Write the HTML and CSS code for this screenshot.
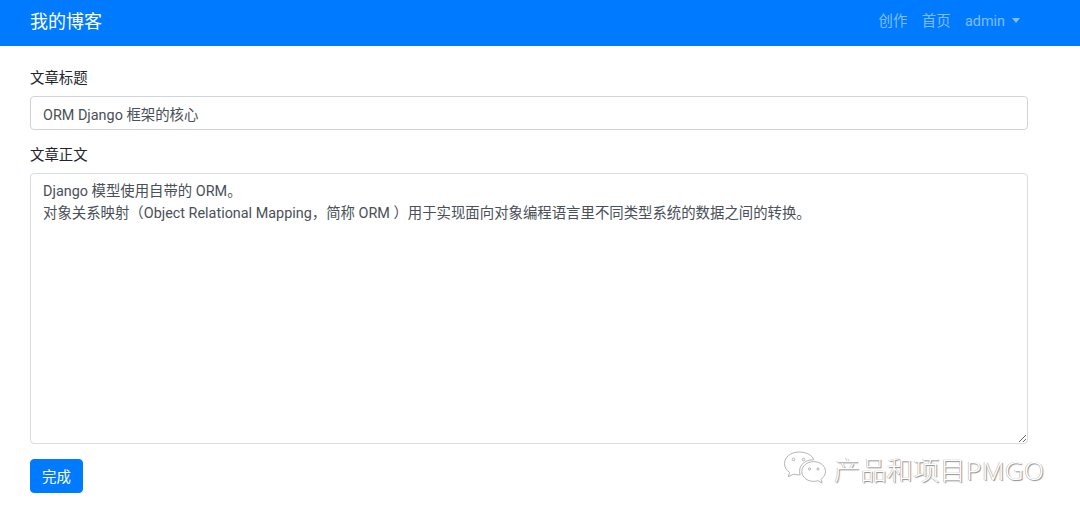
FILE: index.html
```html
<!DOCTYPE html>
<html lang="zh-CN">
<head>
<meta charset="utf-8">
<title>我的博客</title>
<link rel="stylesheet" href="styles.css">
</head>
<body>
<nav class="navbar">
  <a class="brand" href="#">我的博客</a>
  <div class="nav-links">
    <a class="nav-link" href="#">创作</a>
    <a class="nav-link" href="#">首页</a>
    <a class="nav-link" href="#">admin<span class="caret"></span></a>
  </div>
</nav>
<main class="content">
  <form class="post-form">
    <div class="form-group">
      <label class="form-label" for="title">文章标题</label>
      <input class="form-control" id="title" type="text" value="ORM Django 框架的核心">
    </div>
    <div class="form-group">
      <label class="form-label" for="body">文章正文</label>
      <textarea class="form-control form-area" id="body">Django 模型使用自带的 ORM。
对象关系映射（Object Relational Mapping，简称 ORM ）用于实现面向对象编程语言里不同类型系统的数据之间的转换。</textarea>
    </div>
    <button class="btn" type="button">完成</button>
  </form>
</main>
<div class="watermark">
  <svg class="wm-icon" width="46" height="38" viewBox="0 0 46 38" fill="#fff" stroke="#b4b4b4" stroke-width="1">
    <path d="M17 2C8.7 2 2.5 7.2 2.5 13.6c0 3.700 2 6.600 5.200 8.800l-1.400 4.300 5.200-2.600c1.900.5 3.500.8 5.500.8h1.200c-.4-1.200-.6-2.400-.6-3.700 0-6.500 5.800-11.400 13-11.400h1.100C30.500 5.300 24.300 2 17 2z"/>
    <path d="M43.500 21.500c0-5.500-5.400-9.900-11.700-9.900-6.700 0-12 4.400-12 9.900s5.300 9.900 12 9.900c1.400 0 2.800-.3 4.100-.7l4.200 2.400-1.100-3.800c2.700-2 4.500-4.700 4.500-7.800z"/>
    <circle cx="11.500" cy="9.500" r="1.300"/>
    <circle cx="21.500" cy="9.500" r="1.300"/>
    <circle cx="27.500" cy="19" r="1.100"/>
    <circle cx="36" cy="19" r="1.100"/>
  </svg>
  <span class="wm-text">产品和项目PMGO</span>
</div>
</body>
</html>
```
FILE: styles.css
```css
* { box-sizing: border-box; }
html, body { margin: 0; padding: 0; }
body {
  height: 519px;
  overflow: hidden;
  position: relative;
  background: #fff;
  color: #212529;
  font-family: Roboto, "Noto Sans CJK SC", sans-serif;
  font-size: 14.4px;
  line-height: 1.5;
}
.navbar {
  height: 46px;
  background: #007bff;
  padding: 0 30px 3px;
  display: flex;
  align-items: center;
  justify-content: space-between;
}
.brand { color: #fff; font-size: 18px; text-decoration: none; line-height: 1.5; }
.nav-links { display: flex; gap: 14.4px; padding-right: 30px; }
.nav-link { color: rgba(255,255,255,.5); text-decoration: none; }
.caret {
  display: inline-block;
  margin-left: 7px;
  vertical-align: 3px;
  border-top: 5px solid rgba(255,255,255,.5);
  border-left: 4.500px solid transparent;
  border-right: 4.500px solid transparent;
}
.content { padding: 21px 52px 0 30px; }
.post-form { display: flex; flex-direction: column; }
.form-group { margin-bottom: 14px; display: flex; flex-direction: column; }
.form-label { margin-bottom: 7px; height: 22px; line-height: 24px; }
.form-control {
  display: block;
  width: 100%;
  height: 34px;
  padding: 5px 12px;
  font: inherit;
  color: #495057;
  background: #fff;
  border: 1px solid #ced4da;
  border-radius: 4px;
  outline: none;
}
.form-area { height: 271px; padding-top: 7px; resize: vertical; line-height: 21.6px; border-color: #d8dde3; }
.btn {
  align-self: flex-start;
  margin-top: 1px;
  width: 53px;
  height: 34px;
  padding: 4px 0 0;
  color: #fff;
  font: inherit;
  background: #007bff;
  border: 1px solid #007bff;
  border-radius: 4px;
}
.watermark {
  position: absolute;
  left: 782px;
  top: 449px;
  display: flex;
  align-items: flex-start;
  gap: 6px;
}
.wm-icon { display: block; margin-top: 1px; }
.wm-text {
  font-family: "Noto Sans", "Noto Sans CJK SC", sans-serif;
  font-size: 26px;
  line-height: 42px;
  font-weight: 300;
  letter-spacing: 0.4px;
  color: #fff;
  text-shadow: 1px 1px 1px #8a8a8a, -0.5px -0.5px 0.5px #aaa;
}
```
